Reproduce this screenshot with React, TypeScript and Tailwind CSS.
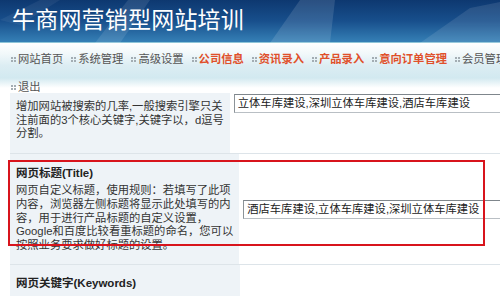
const navItems = [
  { label: "网站首页", hot: false },
  { label: "系统管理", hot: false },
  { label: "高级设置", hot: false },
  { label: "公司信息", hot: true },
  { label: "资讯录入", hot: true },
  { label: "产品录入", hot: true },
  { label: "意向订单管理", hot: true },
  { label: "会员管理", hot: false },
  { label: "退出", hot: false },
];

function Dots() {
  return (
    <svg width="5" height="5" viewBox="0 0 5 5" className="mr-[2px] shrink-0">
      <rect x="0" y="0" width="2" height="2" fill="#a3adb3" />
      <rect x="3" y="0" width="2" height="2" fill="#a3adb3" />
      <rect x="0" y="3" width="2" height="2" fill="#a3adb3" />
      <rect x="3" y="3" width="2" height="2" fill="#a3adb3" />
    </svg>
  );
}

function Field({ value }: { value: string }) {
  return (
    <div className="h-[19px] w-[280px] border border-[#b9bfc4] border-t-[#7f868c] border-l-[#8c9398] bg-white pl-[3px] text-[11.3px] leading-[17px] whitespace-nowrap text-[#222]">
      {value}
    </div>
  );
}

export default function App() {
  return (
    <div
      className="relative h-[296px] w-[500px] overflow-hidden bg-white"
      style={{ fontFamily: '"Liberation Sans", "Noto Sans CJK SC", sans-serif' }}
    >
      {/* banner */}
      <div className="relative h-[43px] border-b border-[#8ec5d8] bg-[linear-gradient(180deg,#0d3870_0%,#184f8c_50%,#3580b6_100%)]">
        <svg className="absolute inset-0" width="500" height="43" viewBox="0 0 500 43">
          <polygon points="95,43 128,0 150,0 120,43" fill="#ffffff" opacity="0.10" />
          <polygon points="270,43 300,0 335,0 330,43" fill="#ffffff" opacity="0.12" />
          <polygon points="420,43 470,8 500,2 500,43" fill="#ffffff" opacity="0.10" />
          <polygon points="0,20 40,0 60,0 20,25" fill="#ffffff" opacity="0.06" />
        </svg>
        <div className="relative pl-[12px] text-[23px] leading-[40px] tracking-[0.2px] whitespace-nowrap text-white">
          牛商网营销型网站培训
        </div>
      </div>

      {/* nav */}
      <div className="h-[50px] bg-[linear-gradient(180deg,#ffffff_0%,#f1f8fa_22%,#dcedf3_45%,#d2e9f0_70%,#ffffff_90%)]">
        <div className="flex w-[540px] flex-wrap gap-x-[8px] pt-[2px] pl-[11px]">
          {navItems.map((item) => (
            <div key={item.label} className="flex h-[28px] items-center">
              <Dots />
              <span
                className={
                  item.hot
                    ? "text-[11.3px] font-bold whitespace-nowrap text-[#e0502b]"
                    : "text-[11.3px] whitespace-nowrap text-[#555]"
                }
              >
                {item.label}
              </span>
            </div>
          ))}
        </div>
      </div>

      {/* form table */}
      <div className="ml-[10px] flex flex-col">
        <div className="flex h-[61px] border-b border-[#dde4e9]">
          <div className="w-[230px] bg-[#eef3f7] px-[6px] pt-[7px] text-[11.3px] leading-[13.7px] whitespace-nowrap text-[#333]">
            增加网站被搜索的几率,一般搜索引擎只关
            <br />
            注前面的3个核心关键字,关键字以，d逗号
            <br />
            分割。
          </div>
          <div className="pt-[1px] pl-[4px]">
            <Field value="立体车库建设,深圳立体车库建设,酒店车库建设" />
          </div>
        </div>

        <div className="flex h-[111px] border-b border-[#dde4e9]">
          <div className="flex w-[230px] flex-col justify-center bg-[#eef3f7] px-[6px] whitespace-nowrap text-[#333]">
            <div className="mb-[2px] text-[11.5px] leading-[17px] font-bold text-[#222]">网页标题(Title)</div>
            <div className="text-[11.3px] leading-[13.7px]">
              网页自定义标题，使用规则：若填写了此项
              <br />
              内容，浏览器左侧标题将显示此处填写的内
              <br />
              容，用于进行产品标题的自定义设置，
              <br />
              Google和百度比较看重标题的命名，您可以
              <br />
              按照业务要求做好标题的设置。
            </div>
          </div>
          <div className="flex items-center pl-[4px]">
            <Field value="酒店车库建设,立体车库建设,深圳立体车库建设" />
          </div>
        </div>

        <div className="flex h-[40px]">
          <div className="w-[230px] bg-[#eef3f7] px-[6px] pt-[10px] text-[11.5px] leading-[17px] font-bold whitespace-nowrap text-[#222]">
            网页关键字(Keywords)
          </div>
        </div>
      </div>

      {/* red highlight box */}
      <div className="pointer-events-none absolute top-[160px] left-[8px] h-[86px] w-[477px] border-2 border-[#d8141c]" />
    </div>
  );
}
